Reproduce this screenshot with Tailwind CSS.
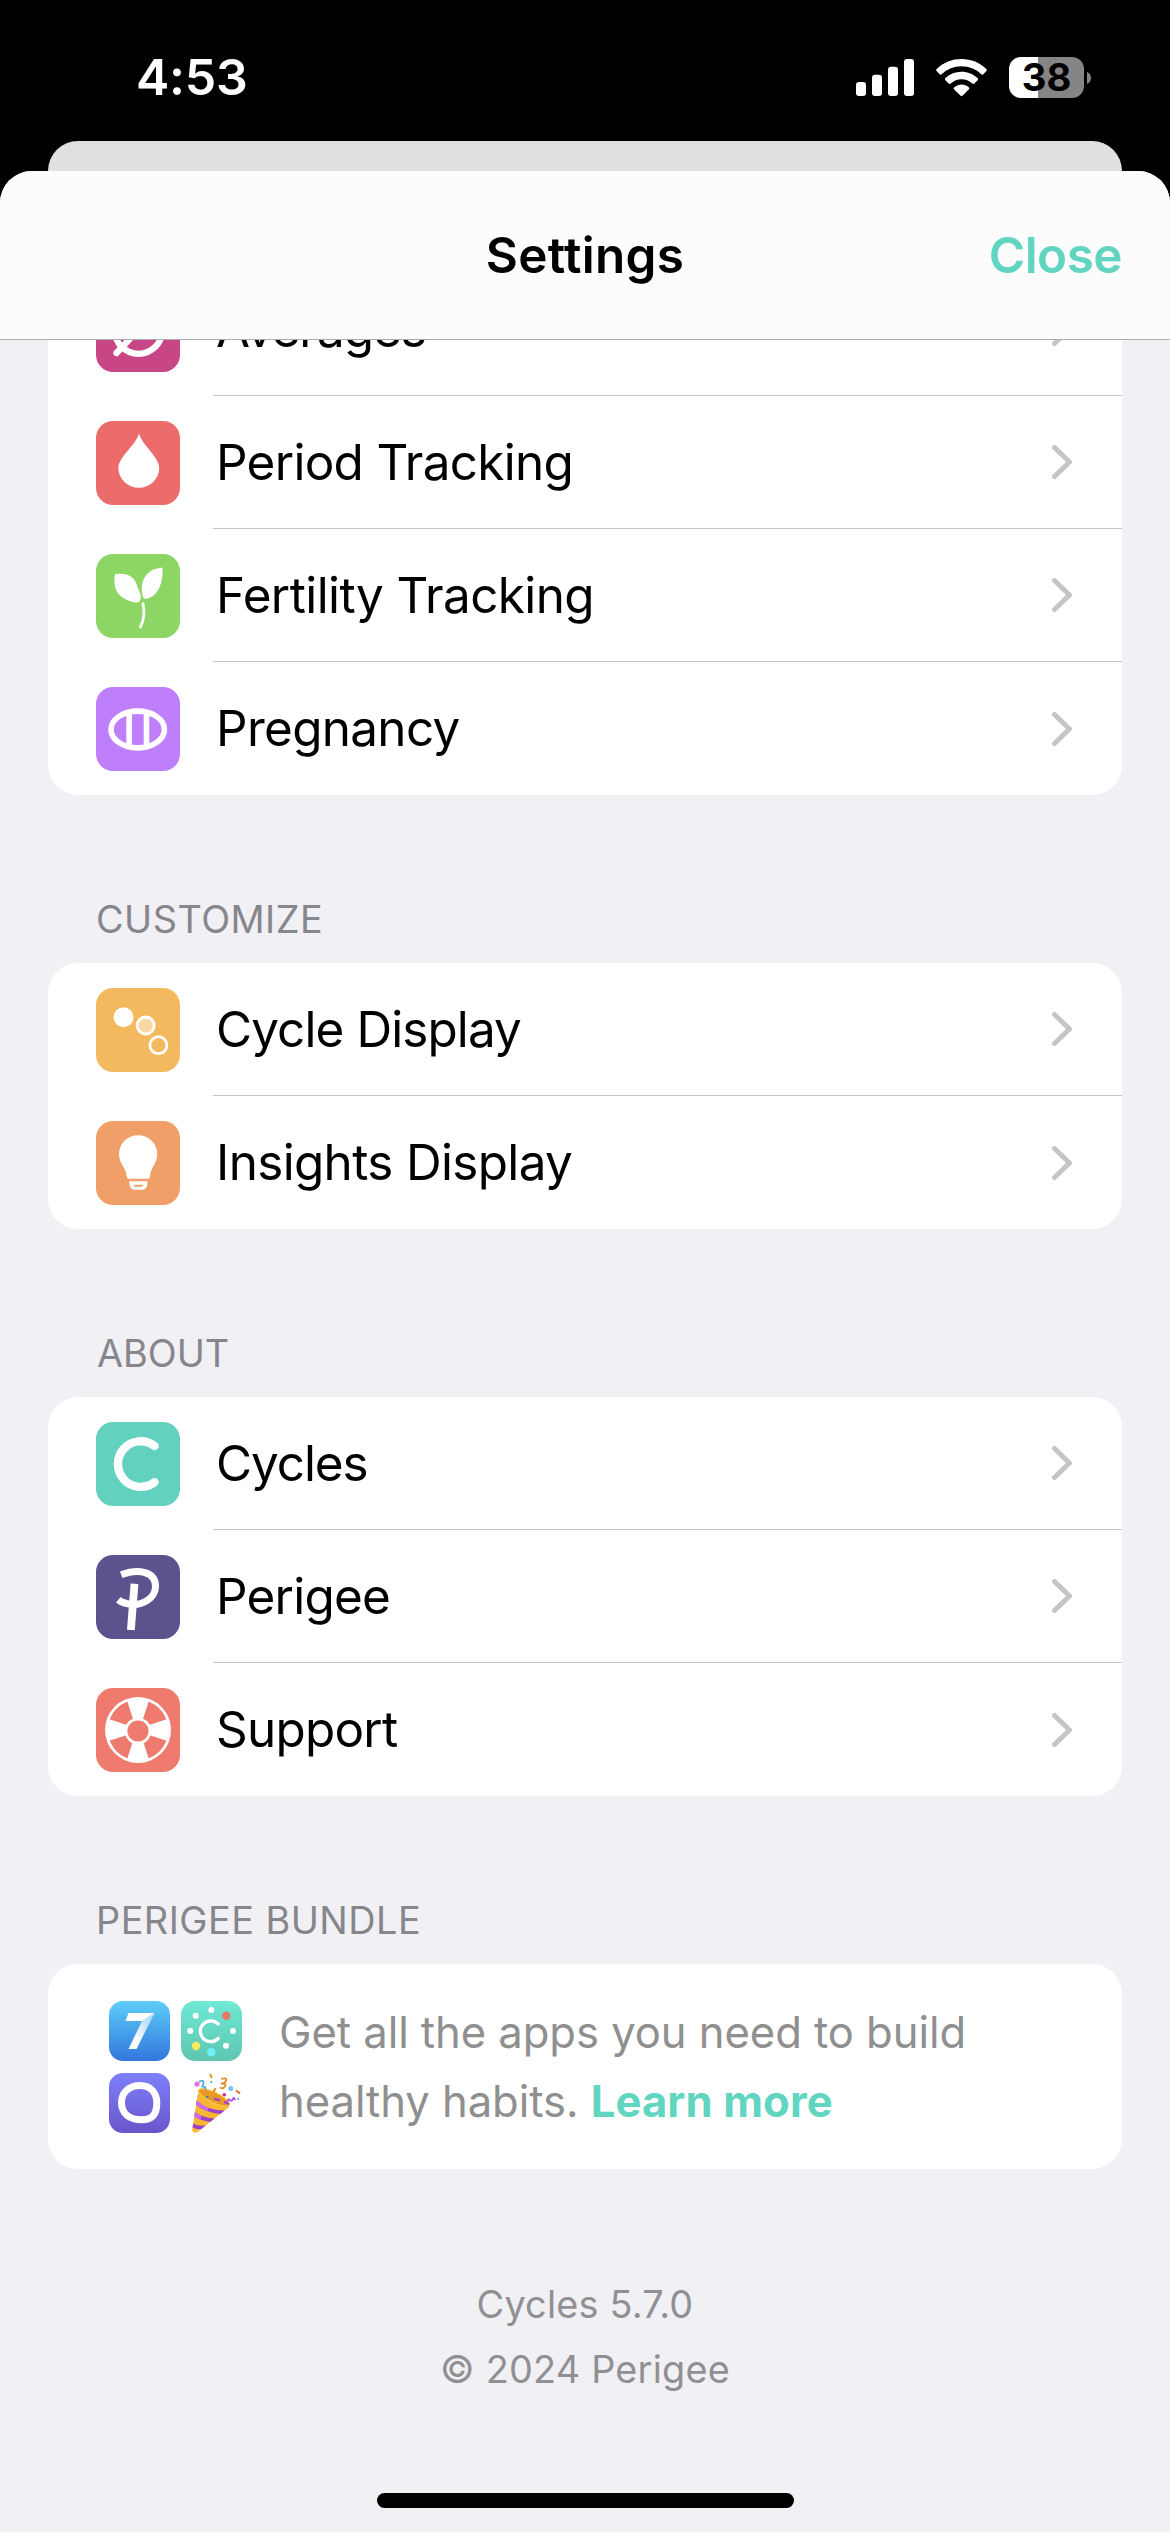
<!DOCTYPE html>
<html lang="en">
<head>
<meta charset="utf-8">
<title>Settings</title>
<script src="https://cdn.jsdelivr.net/npm/@tailwindcss/browser@4"></script>
</head>
<body class="bg-black">
<div class="flex h-[2532px] w-[1170px] flex-col overflow-hidden bg-black font-['Inter','Liberation_Sans',sans-serif] text-black">

  <!-- Status bar -->
  <div class="flex h-[141px] shrink-0 items-start justify-between pt-[57px] pr-[79px] pl-[136px]">
    <div class="flex h-[41px] items-center text-[50px] font-semibold tracking-[-0.2px] text-white">4:53</div>
    <div class="flex h-[41px] items-center">
      <svg class="mr-[22px] h-[41px] w-[58px]" viewBox="0 0 58 41" fill="#fff">
        <rect x="0" y="25" width="10" height="14" rx="3"/><rect x="16" y="17.7" width="10" height="21.3" rx="3"/><rect x="32" y="9.7" width="10" height="29.3" rx="3"/><rect x="48" y="2" width="10" height="37" rx="3"/>
      </svg>
      <svg class="mr-[22px] h-[41px] w-[51px]" viewBox="0 0 51 41" fill="#fff">
        <path d="M25.5 2c9.600 0 18.300 3.700 24.800 9.900.7.700.7 1.500.1 2.200l-3 3.100c-.6.600-1.500.600-2.100 0a28.500 28.500 0 0 0-39.600 0c-.6.600-1.500.600-2.100 0l-3-3.100c-.6-.7-.6-1.500.1-2.200A35.800 35.800 0 0 1 25.500 2z"/>
        <path d="M25.500 14.700c6.200 0 11.800 2.400 16 6.300.7.700.7 1.500.1 2.200l-3.200 3.300c-.6.600-1.400.600-2.100 0a15.800 15.800 0 0 0-21.600 0c-.7.600-1.500.600-2.100 0l-3.200-3.300c-.6-.7-.6-1.500.1-2.200a23.300 23.300 0 0 1 16-6.300z"/>
        <path d="M25.500 27.500c2.800 0 5.300 1 7.200 2.700.8.700.8 1.500.1 2.200l-6.200 6.200c-.7.700-1.500.7-2.200 0l-6.200-6.200c-.7-.7-.7-1.500.1-2.200a10.800 10.800 0 0 1 7.200-2.700z"/>
      </svg>
      <div class="flex h-[41px] w-[75px] items-center justify-center overflow-hidden rounded-[12px] bg-linear-to-r from-white from-[29px] to-[#858585] to-[29px] text-[38.300px] font-bold text-black">38</div>
      <svg class="ml-[3px] h-[12px] w-[4px]" viewBox="0 0 4 12"><path d="M0 0c2.500 1 4 3.300 4 6s-1.500 5-4 6z" fill="#858585"/></svg>
    </div>
  </div>

  <!-- Card behind the sheet -->
  <div class="mx-12 h-[30px] shrink-0 rounded-t-[30px] bg-[#e0e0e0]"></div>

  <!-- Settings sheet -->
  <div class="flex min-h-0 flex-1 flex-col overflow-hidden rounded-t-[32px] bg-[#f1f0f5]">
    <header class="grid h-[169px] shrink-0 grid-cols-3 items-center border-b border-[#acacaf] bg-[#fcfcfd] px-12 text-[49.400px] font-semibold">
      <div></div>
      <h1 class="text-center tracking-[0.330px]">Settings</h1>
      <button class="text-right tracking-[-0.500px] text-[#62d5c1]">Close</button>
    </header>

    <main class="flex min-h-0 flex-1 flex-col overflow-hidden px-12">
      <section class="-mt-[77px] shrink-0 overflow-hidden rounded-[30px] bg-white text-[49.400px]">
        <div class="flex h-[133px] items-center pl-12">
          <svg class="h-[84px] w-[84px] shrink-0 rounded-[17px] bg-[#c84586]" viewBox="0 0 84 84" fill="none" stroke="#fff" stroke-width="6.300" stroke-linecap="round"><circle cx="42.500" cy="42" r="23.800"/><path d="M20.500 65L64 19"/></svg>
          <div class="ml-[33px] flex h-full flex-1 items-center justify-between border-b border-[#c6c6c8] pr-[50px] pl-[3px]"><span class="tracking-[-1px]">Averages</span>
            <svg class="h-[34px] w-[20px]" viewBox="0 0 20 34" fill="none" stroke="#c5c5c6" stroke-width="5" stroke-linecap="round" stroke-linejoin="round"><path d="M2.500 2.500L17.500 17L2.500 31.500"/></svg></div>
        </div>
        <div class="flex h-[133px] items-center pl-12">
          <svg class="h-[84px] w-[84px] shrink-0 rounded-[17px] bg-[#ec6c6b]" viewBox="0 0 84 84" fill="#fff"><path d="M43 12.500C46 24 63.200 36 63.200 47a20.400 19.800 0 0 1-40.800 0C22.400 36 40 24 43 12.500z"/></svg>
          <div class="ml-[33px] flex h-full flex-1 items-center justify-between border-b border-[#c6c6c8] pr-[50px] pl-[3px]"><span class="tracking-[-0.680px]">Period Tracking</span>
            <svg class="h-[34px] w-[20px]" viewBox="0 0 20 34" fill="none" stroke="#c5c5c6" stroke-width="5" stroke-linecap="round" stroke-linejoin="round"><path d="M2.500 2.500L17.500 17L2.500 31.500"/></svg></div>
        </div>
        <div class="flex h-[133px] items-center pl-12">
          <svg class="h-[84px] w-[84px] shrink-0 rounded-[17px] bg-[#8dd665]" viewBox="0 0 84 84" fill="#fff"><path d="M19.500 20C30 18.800 37.500 21.500 40.500 30C42 35 45 39.500 44.800 43C44.500 47 43 48.600 39.500 48.500C25 45.500 16 38 19 20.500z"/><path d="M66.500 13.500C55 14.500 46 21 45.700 34C45.700 40 46.500 44 49.500 45C60 43.500 67.500 32 66.500 13.500z"/><path d="M46.800 48.500Q50.200 62 44 74" fill="none" stroke="#fff" stroke-width="2.800"/></svg>
          <div class="ml-[33px] flex h-full flex-1 items-center justify-between border-b border-[#c6c6c8] pr-[50px] pl-[3px]"><span class="tracking-[-0.570px]">Fertility Tracking</span>
            <svg class="h-[34px] w-[20px]" viewBox="0 0 20 34" fill="none" stroke="#c5c5c6" stroke-width="5" stroke-linecap="round" stroke-linejoin="round"><path d="M2.500 2.500L17.500 17L2.500 31.500"/></svg></div>
        </div>
        <div class="flex h-[133px] items-center pl-12">
          <svg class="h-[84px] w-[84px] shrink-0 rounded-[17px] bg-[#bf7ffa]" viewBox="0 0 84 84" fill="none" stroke="#fff" stroke-width="5.600"><ellipse cx="41.700" cy="42.500" rx="26.700" ry="18.400"/><path d="M33.100 25.500V59.500M50.500 25.500V59.500"/></svg>
          <div class="ml-[33px] flex h-full flex-1 items-center justify-between pr-[50px] pl-[3px]"><span class="tracking-[-0.660px]">Pregnancy</span>
            <svg class="h-[34px] w-[20px]" viewBox="0 0 20 34" fill="none" stroke="#c5c5c6" stroke-width="5" stroke-linecap="round" stroke-linejoin="round"><path d="M2.500 2.500L17.500 17L2.500 31.500"/></svg></div>
        </div>
      </section>

      <h2 class="flex h-[168px] shrink-0 items-end pb-5 pl-12 text-[37.800px] leading-[48px] tracking-[0.470px] text-[#87868b]">CUSTOMIZE</h2>
      <section class="shrink-0 overflow-hidden rounded-[30px] bg-white text-[49.400px]">
        <div class="flex h-[133px] items-center pl-12">
          <svg class="h-[84px] w-[84px] shrink-0 rounded-[17px] bg-[#f3b95e]" viewBox="0 0 84 84"><circle cx="27.500" cy="29.300" r="10" fill="#fff"/><circle cx="49.700" cy="37.500" r="8.500" fill="#fad8a4" stroke="#fff" stroke-width="2.800"/><circle cx="62.400" cy="57.200" r="8.500" fill="none" stroke="#fff" stroke-width="2.800"/></svg>
          <div class="ml-[33px] flex h-full flex-1 items-center justify-between border-b border-[#c6c6c8] pr-[50px] pl-[3px]"><span class="tracking-[-0.880px]">Cycle Display</span>
            <svg class="h-[34px] w-[20px]" viewBox="0 0 20 34" fill="none" stroke="#c5c5c6" stroke-width="5" stroke-linecap="round" stroke-linejoin="round"><path d="M2.500 2.500L17.500 17L2.500 31.500"/></svg></div>
        </div>
        <div class="flex h-[133px] items-center pl-12">
          <svg class="h-[84px] w-[84px] shrink-0 rounded-[17px] bg-[#f09f68]" viewBox="0 0 84 84" fill="#fff"><path d="M42.100 14.300C53 14.300 61.200 22.500 61.200 33.300C61.200 43 54.500 46 54 55.500Q53.900 57.800 51.800 57.800H32.800Q30.900 57.800 30.700 55.500C30 46 23 43 23 33.300C23 22.500 31.200 14.300 42.100 14.300z"/><path d="M33.300 60.300H51.500C51.500 65.500 50 68.800 46 68.800H38.800C34.800 68.800 33.300 65.500 33.300 60.300z"/><path d="M37.500 63.700H47.300Q46.800 65.700 45 65.700H39.800Q38 65.700 37.500 63.700z" fill="#f09f68"/></svg>
          <div class="ml-[33px] flex h-full flex-1 items-center justify-between pr-[50px] pl-[3px]"><span class="tracking-[-0.630px]">Insights Display</span>
            <svg class="h-[34px] w-[20px]" viewBox="0 0 20 34" fill="none" stroke="#c5c5c6" stroke-width="5" stroke-linecap="round" stroke-linejoin="round"><path d="M2.500 2.500L17.500 17L2.500 31.500"/></svg></div>
        </div>
      </section>

      <h2 class="flex h-[168px] shrink-0 items-end pb-5 pl-[49px] text-[37.800px] leading-[48px] text-[#87868b]">ABOUT</h2>
      <section class="shrink-0 overflow-hidden rounded-[30px] bg-white text-[49.400px]">
        <div class="flex h-[133px] items-center pl-12">
          <svg class="h-[84px] w-[84px] shrink-0 rounded-[17px] bg-[#62d1bd]" viewBox="0 0 84 84" fill="none" stroke="#fff" stroke-width="8.400" stroke-linecap="round"><path d="M58.600 24A22.800 22.800 0 1 0 58.600 60.200"/></svg>
          <div class="ml-[33px] flex h-full flex-1 items-center justify-between border-b border-[#c6c6c8] pr-[50px] pl-[3px]"><span class="tracking-[-1.060px]">Cycles</span>
            <svg class="h-[34px] w-[20px]" viewBox="0 0 20 34" fill="none" stroke="#c5c5c6" stroke-width="5" stroke-linecap="round" stroke-linejoin="round"><path d="M2.500 2.500L17.500 17L2.500 31.500"/></svg></div>
        </div>
        <div class="flex h-[133px] items-center pl-12">
          <svg class="h-[84px] w-[84px] shrink-0 rounded-[17px] bg-[#5b528e]" viewBox="0 0 84 84" fill="none" stroke="#fff" stroke-width="7"><path d="M25.200 19.800C42 13.500 60 16 59.500 32C59 44 46 50 36.500 49.500C30 49 25.500 47.500 22.300 44.800" stroke-width="7"/><path d="M38.500 28.700L34.900 75" stroke-width="7.800"/></svg>
          <div class="ml-[33px] flex h-full flex-1 items-center justify-between border-b border-[#c6c6c8] pr-[50px] pl-[3px]"><span class="tracking-[-0.750px]">Perigee</span>
            <svg class="h-[34px] w-[20px]" viewBox="0 0 20 34" fill="none" stroke="#c5c5c6" stroke-width="5" stroke-linecap="round" stroke-linejoin="round"><path d="M2.500 2.500L17.500 17L2.500 31.500"/></svg></div>
        </div>
        <div class="flex h-[133px] items-center pl-12">
          <svg class="h-[84px] w-[84px] shrink-0 rounded-[17px] bg-[#ef7b6e]" viewBox="0 0 84 84" fill="#fff"><circle cx="42" cy="42" r="33"/><circle cx="42" cy="42" r="30.300" fill="#ef7b6e"/><path d="M31 12.500L37 31H47L53 12.500L42 10zM31 71.500L37 53H47L53 71.500L42 74zM12.500 31L31 37V47L12.500 53L10 42zM71.500 31L53 37V47L71.500 53L74 42z"/><circle cx="42" cy="43" r="13.300"/><circle cx="42" cy="43" r="10.600" fill="#ef7b6e"/></svg>
          <div class="ml-[33px] flex h-full flex-1 items-center justify-between pr-[50px] pl-[3px]"><span class="tracking-[-0.730px]">Support</span>
            <svg class="h-[34px] w-[20px]" viewBox="0 0 20 34" fill="none" stroke="#c5c5c6" stroke-width="5" stroke-linecap="round" stroke-linejoin="round"><path d="M2.500 2.500L17.500 17L2.500 31.500"/></svg></div>
        </div>
      </section>

      <h2 class="flex h-[168px] shrink-0 items-end pb-5 pl-12 text-[37.800px] leading-[48px] tracking-[0.490px] text-[#87868b]">PERIGEE BUNDLE</h2>
      <section class="flex h-[205px] shrink-0 items-center rounded-[30px] bg-white pl-[61px]">
        <div class="grid shrink-0 grid-cols-2 gap-x-[11px] gap-y-3">
          <svg class="h-[60px] w-[61px] rounded-[14px] bg-linear-to-b from-[#5fcdf8] to-[#3377dc]" viewBox="0 0 61 60">
            <defs><linearGradient id="seven" x1="0" y1="1" x2=".6" y2="0"><stop offset=".3" stop-color="#fff"/><stop offset="1" stop-color="#fff" stop-opacity=".55"/></linearGradient></defs>
            <path d="M19.500 12H45.500L33 20H16.500z" fill="#fff"/><path d="M45.500 12L27.500 48H19.500L33 20z" fill="url(#seven)"/>
          </svg>
          <svg class="h-[60px] w-[61px] rounded-[14px] bg-linear-to-b from-[#70e9d5] to-[#5dc6b1]" viewBox="0 0 61 60" fill="#fff">
            <path d="M37.200 23A10.400 10.400 0 1 0 37.200 37.500" fill="none" stroke="#fff" stroke-width="3.300" stroke-linecap="round"/>
            <circle cx="30.300" cy="9" r="3"/><circle cx="14.700" cy="14.700" r="3"/><circle cx="9.300" cy="30" r="3"/><circle cx="52" cy="30" r="3"/><circle cx="45" cy="44.700" r="3"/>
            <circle cx="45.300" cy="14.700" r="4.200" fill="#e87865"/><circle cx="15" cy="45" r="4.200" fill="#f8e85c"/><circle cx="30.300" cy="51.300" r="4.200" fill="#6cf2f7"/>
          </svg>
          <svg class="h-[60px] w-[61px] rounded-[14px] bg-linear-to-b from-[#7d80fb] to-[#6a55ca]" viewBox="0 0 61 60" fill="none" stroke="#fff" stroke-width="7"><path d="M31 12.500C42 12.500 47.800 20 47.800 30C47.800 41 43.500 46.800 33 46.800C21 46.800 12.500 41 12.500 29.500C12.500 19.500 20 12.500 31 12.500z"/></svg>
          <svg class="h-[60px] w-[61px]" viewBox="0 0 61 60" fill="none">
            <defs><clipPath id="cone"><path d="M17.500 16.500L48.500 31.500L48 34L16.500 59Q12 61.500 11.300 56.500z"/></clipPath></defs>
            <path d="M17.500 16.500L48.500 31.500L48 34L16.500 59Q12 61.500 11.300 56.500z" fill="#f7b733"/>
            <g clip-path="url(#cone)" stroke="#9a3fd0" stroke-width="3.800"><path d="M14 28.500Q25 39 43 39.500M11 39.500Q20 47 35 47.500M9 50.500Q14 55.500 25 54.500"/><path d="M14 28.500Q20 34 27 36.500M11 39.500Q15 43 20 45" stroke="#cf6be4"/></g>
            <ellipse cx="33" cy="24.500" rx="17" ry="5.200" transform="rotate(26 33 24.500)" fill="#e59a25" stroke="#fbc94a" stroke-width="1.200"/>
            <path d="M33 25.500l6 2M43 29l5 2" stroke="#a53dcb" stroke-width="2.200"/><circle cx="26.500" cy="24" r="1.200" fill="#3d7fc0"/>
            <path d="M18 8.500q5-2 4.500 1.500t-2 3.500q5 0 4 3" stroke="#46a8e8" stroke-width="1.700"/>
            <path d="M40 6q6-2 5 1.500t-5 3q6 0 4 3t-5 1" stroke="#e88b2a" stroke-width="1.800"/>
            <path d="M29 1l1.800 4M34.500 15l-2 4" stroke="#e5942a" stroke-width="2"/><path d="M55 17.500l4 3" stroke="#df6c2c" stroke-width="2"/>
            <path d="M46 30q1-5 3-3t3-1 2 1" stroke="#b14ee0" stroke-width="1.800"/>
            <circle cx="16" cy="11" r="2.600" fill="#df75df"/><circle cx="49.800" cy="15.500" r="2.500" fill="#75c6f0"/><circle cx="43.300" cy="21.700" r="1.800" fill="#c52d91"/><circle cx="30.300" cy="9" r=".9" fill="#3d88d9"/><circle cx="57.200" cy="26" r="1" fill="#5298df"/>
          </svg>
        </div>
        <p class="ml-[37px] text-[43.600px] leading-[69px] tracking-[-0.060px] text-[#8f8f8f]">Get all the apps you need to build<br>healthy habits. <a class="font-bold tracking-[0.100px] text-[#62d5c1]">Learn more</a></p>
      </section>

      <footer class="mt-[103px] shrink-0 text-center text-[37.800px] leading-[65px] tracking-[0.220px] text-[#909092]">
        <p>Cycles 5.7.0</p>
        <p>© 2024 Perigee</p>
      </footer>
      <div class="mt-auto mb-6 h-[15px] w-[417px] shrink-0 self-center rounded-full bg-black"></div>
    </main>
  </div>
</div>
</body>
</html>
